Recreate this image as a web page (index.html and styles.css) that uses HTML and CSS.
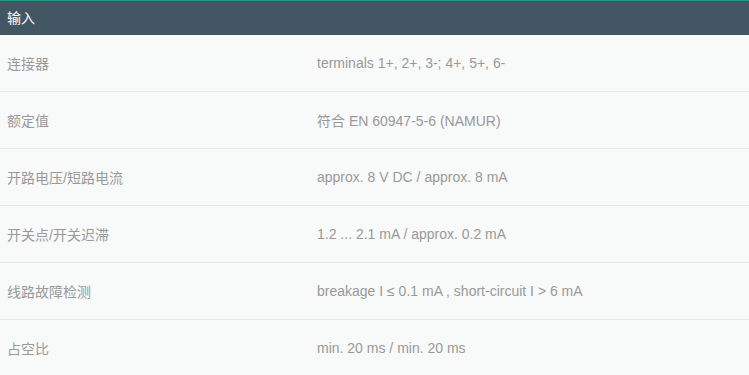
FILE: index.html
```html
<!DOCTYPE html>
<html lang="zh">
<head>
<meta charset="utf-8">
<link rel="stylesheet" href="styles.css">
</head>
<body>
<div class="spec">
  <div class="spec-head">输入</div>
  <div class="spec-row"><div class="spec-key">连接器</div><div class="spec-val">terminals 1+, 2+, 3-; 4+, 5+, 6-</div></div>
  <div class="spec-row"><div class="spec-key">额定值</div><div class="spec-val">符合 EN 60947-5-6 (NAMUR)</div></div>
  <div class="spec-row"><div class="spec-key">开路电压/短路电流</div><div class="spec-val">approx. 8 V DC / approx. 8 mA</div></div>
  <div class="spec-row"><div class="spec-key">开关点/开关迟滞</div><div class="spec-val">1.2 ... 2.1 mA / approx. 0.2 mA</div></div>
  <div class="spec-row"><div class="spec-key">线路故障检测</div><div class="spec-val">breakage I ≤ 0.1 mA , short-circuit I &gt; 6 mA</div></div>
  <div class="spec-row"><div class="spec-key">占空比</div><div class="spec-val">min. 20 ms / min. 20 ms</div></div>
</div>
</body>
</html>
```
FILE: styles.css
```css
html, body {
  margin: 0;
  padding: 0;
  background: #f8f9f9;
}
body {
  font-family: "Liberation Sans", Arial, "Noto Sans CJK SC", sans-serif;
  font-size: 14px;
}
.spec {
  border-top: 1px solid #17a07f;
}
.spec-head {
  background: #435663;
  color: #ffffff;
  height: 34px;
  line-height: 34px;
  padding-left: 7px;
}
.spec-row {
  display: flex;
  align-items: center;
  height: 56px;
  border-bottom: 1px solid #e6e7e7;
  color: #999999;
}
.spec-key {
  width: 310px;
  padding-left: 7px;
}
.spec-val {
  flex: 1;
}
```
